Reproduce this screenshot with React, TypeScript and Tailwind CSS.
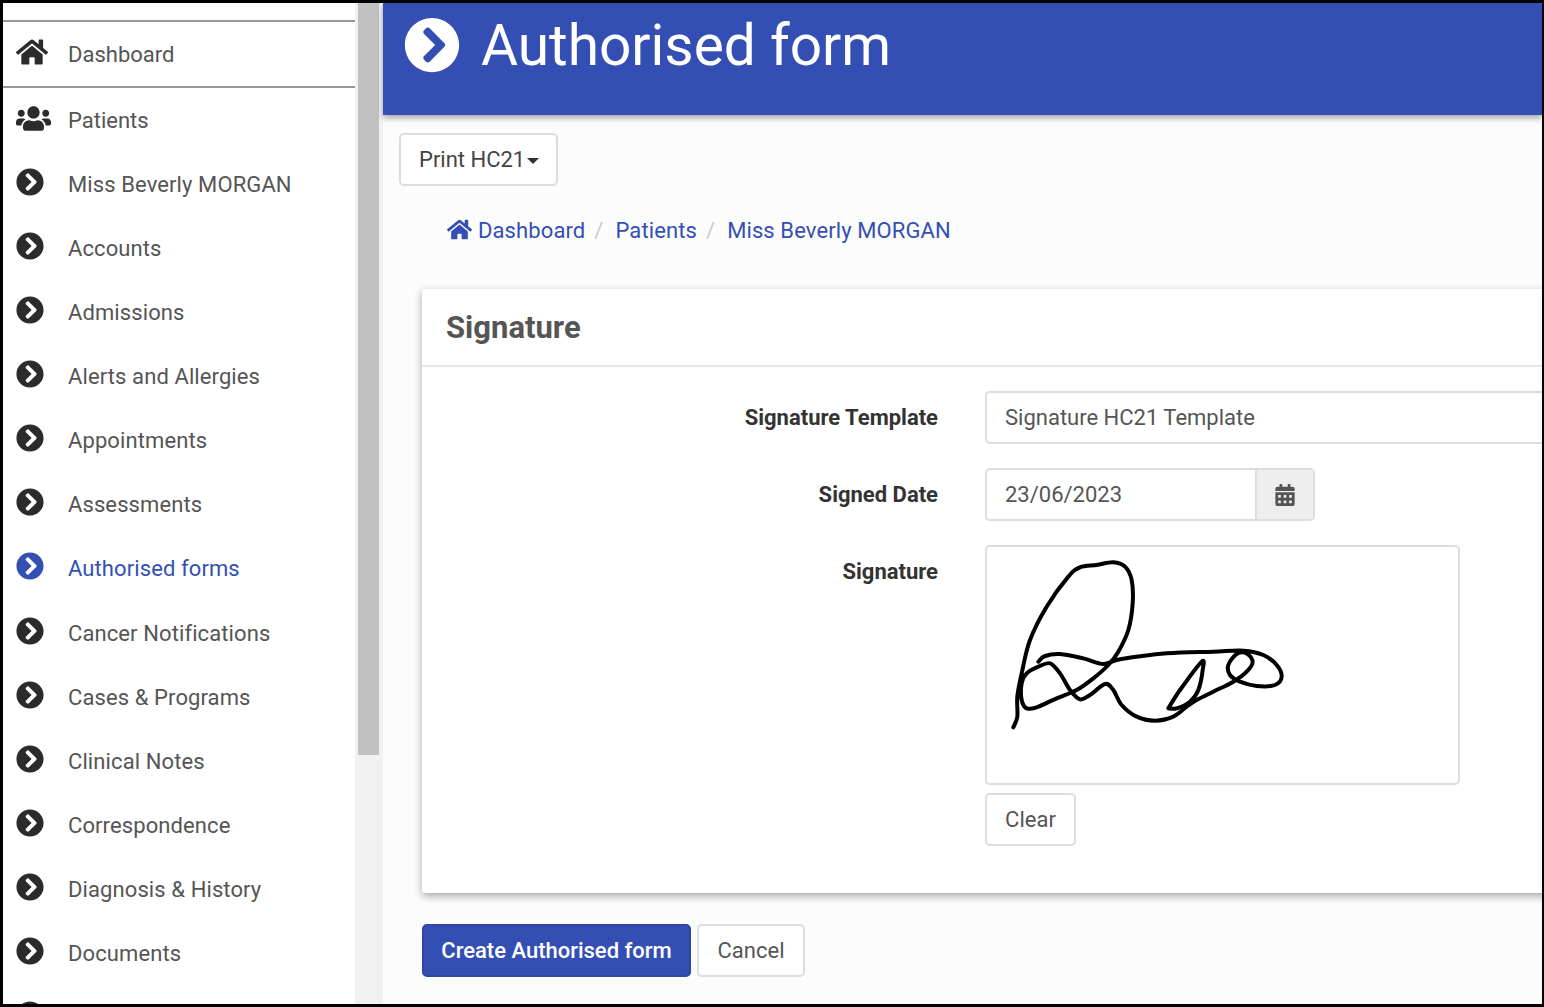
import { FaCalendarAlt, FaChevronCircleRight, FaHome, FaUsers } from 'react-icons/fa';

const navItems = [
  'Miss Beverly MORGAN',
  'Accounts',
  'Admissions',
  'Alerts and Allergies',
  'Appointments',
  'Assessments',
  'Authorised forms',
  'Cancer Notifications',
  'Cases & Programs',
  'Clinical Notes',
  'Correspondence',
  'Diagnosis & History',
  'Documents',
  '',
];

// signature traced from the reference, catmull-rom smoothed
const mainStroke: number[][] = [
  [100, 592], [112, 560], [112, 500], [125, 430], [150, 330], [200, 230], [265, 140], [300, 112], [350, 105], [400, 97],
  [435, 110], [455, 150], [458, 220], [445, 300], [415, 365], [385, 405], [340, 445], [290, 480], [230, 505], [170, 532],
  [140, 535], [125, 510], [125, 460], [140, 430], [175, 410], [210, 400], [240, 430], [270, 480], [300, 508], [330, 495],
  [375, 462], [400, 480], [425, 525], [470, 560], [525, 572], [580, 560], [620, 530], [650, 510], [700, 485], [760, 455],
  [800, 425], [818, 395], [800, 370], [770, 372], [745, 405], [750, 435], [780, 455], [830, 468], [885, 465], [905, 440],
  [890, 405], [850, 375], [790, 362], [700, 365], [560, 370], [420, 388], [370, 402], [310, 385], [240, 372], [195, 378],
  [175, 395],
];
const leafStroke: number[][] = [
  [565, 535], [600, 480], [665, 395], [668, 420], [655, 480], [630, 515], [590, 535], [565, 535],
];

function smoothPath(pts: number[][]) {
  let d = `M${pts[0][0]} ${pts[0][1]}`;
  for (let i = 0; i < pts.length - 1; i++) {
    const p0 = pts[Math.max(i - 1, 0)];
    const p1 = pts[i];
    const p2 = pts[i + 1];
    const p3 = pts[Math.min(i + 2, pts.length - 1)];
    const c1x = p1[0] + (p2[0] - p0[0]) / 6;
    const c1y = p1[1] + (p2[1] - p0[1]) / 6;
    const c2x = p2[0] - (p3[0] - p1[0]) / 6;
    const c2y = p2[1] - (p3[1] - p1[1]) / 6;
    d += ` C${c1x} ${c1y} ${c2x} ${c2y} ${p2[0]} ${p2[1]}`;
  }
  return d;
}

function Sidebar() {
  return (
    <div className="w-[352px] shrink-0 bg-white text-[22px] text-[#555]">
      <div className="mt-[17px] h-[68px] flex items-center border-y-2 border-[#999] pl-[13px]">
        <FaHome className="w-[32px] h-[32px] text-[#2b2b2b] -mt-[4px]" />
        <span className="ml-[20px]">Dashboard</span>
      </div>
      <div className="h-[64px] flex items-center pl-[13px]">
        <FaUsers className="w-[35px] h-[35px] text-[#2b2b2b] -mt-[4px]" />
        <span className="ml-[17px]">Patients</span>
      </div>
      {navItems.map((item, i) => {
        const active = item === 'Authorised forms';
        return (
          <div key={i} className="h-[64.15px] flex items-center pl-[13px]">
            <FaChevronCircleRight className={`w-[28px] h-[28px] -mt-[5px] ${active ? 'text-[#344fb3]' : 'text-[#2b2b2b]'}`} />
            <span className={`ml-[24px] tracking-[0.1px] ${active ? 'text-[#344fb3]' : ''}`}>{item}</span>
          </div>
        );
      })}
    </div>
  );
}

function FormRow({ label, children }: { label: string; children: React.ReactNode }) {
  return (
    <div className="flex">
      <label className="w-[563px] shrink-0 pr-[47px] text-right font-bold text-[#333] leading-[53px]">{label}</label>
      {children}
    </div>
  );
}

export default function App() {
  return (
    <div className="w-[1544px] h-[1007px] border-[3px] border-r-2 border-black overflow-hidden flex bg-white font-['Roboto',sans-serif]">
      <Sidebar />
      <div className="w-[28px] shrink-0 bg-[#f1f1f1]">
        <div className="ml-[3px] w-[21px] h-[752px] bg-[#c1c1c1]" />
      </div>
      <div className="flex-1 min-w-0 bg-[#fcfcfc] text-[22px] text-[#555]">
        <div className="h-[112px] bg-[#344fb3] shadow-[0_3px_6px_rgba(0,0,0,0.35)] flex items-start pl-[21px] pt-[14px] text-white">
          <FaChevronCircleRight className="w-[56px] h-[56px]" />
          <h1 className="ml-[21px] mt-[1px] text-[56.8px] leading-[56px]">Authorised form</h1>
        </div>
        <div className="pl-[16px] pt-[18px]">
          <button className="h-[53px] w-[159px] border-2 border-[#ddd] rounded-[5px] bg-white text-[#444] flex items-center pl-[18px]">
            Print HC21
            <span className="ml-[2px] mt-[3px] border-x-[6px] border-x-transparent border-t-[6px] border-t-[#333]" />
          </button>
        </div>
        <div className="flex items-center pl-[64px] mt-[26px] h-[36px] tracking-[0.1px] text-[#344fb3]">
          <FaHome className="w-[25px] h-[25px] -mt-[2px]" />
          <span className="ml-[6px]">Dashboard</span>
          <span className="mx-[9px] text-[#ccc]">/</span>
          <span className="ml-[3px]">Patients</span>
          <span className="mx-[9px] text-[#ccc]">/</span>
          <span className="ml-[3px]">Miss Beverly MORGAN</span>
        </div>
        <div className="ml-[39px] mt-[41px] w-[1200px] h-[604px] bg-white shadow-[0_3px_8px_rgba(0,0,0,0.35)] rounded-[2px]">
          <div className="h-[78px] border-b-2 border-[#e6e6e6] pl-[24px] pt-[2px] flex items-center text-[31px] font-bold text-[#555]">
            Signature
          </div>
          <div className="pt-[24px] flex flex-col gap-[24px]">
            <FormRow label="Signature Template">
              <div className="h-[53px] w-[640px] border-2 border-[#ddd] rounded-[5px] pl-[18px] flex items-center">
                Signature HC21 Template
              </div>
            </FormRow>
            <FormRow label="Signed Date">
              <div className="h-[53px] w-[330px] flex border-2 border-[#ddd] rounded-[5px] overflow-hidden">
                <div className="flex-1 pl-[18px] flex items-center">23/06/2023</div>
                <div className="w-[58px] border-l-2 border-[#ddd] bg-[#eee] flex items-center justify-center">
                  <FaCalendarAlt className="w-[20px] h-[22px] text-[#555]" />
                </div>
              </div>
            </FormRow>
            <FormRow label="Signature">
              <div>
                <div className="h-[240px] w-[475px] border-2 border-[#ddd] rounded-[5px] overflow-hidden bg-white">
                  <svg className="block w-full h-full" viewBox="21 51 1413 708" fill="none" stroke="#000" strokeWidth="12" strokeLinecap="round" strokeLinejoin="round">
                    <path d={smoothPath(mainStroke)} />
                    <path d={smoothPath(leafStroke)} />
                  </svg>
                </div>
                <button className="mt-[8px] h-[53px] w-[91px] border-2 border-[#ddd] rounded-[5px] bg-white text-[#555]">Clear</button>
              </div>
            </FormRow>
          </div>
        </div>
        <div className="ml-[39px] mt-[31px] flex gap-[6px]">
          <button className="h-[53px] w-[269px] rounded-[5px] bg-[#344fb3] text-white font-medium border-2 border-[#2f47a3]">Create Authorised form</button>
          <button className="h-[53px] w-[108px] rounded-[5px] border-2 border-[#ddd] bg-white text-[#555]">Cancel</button>
        </div>
      </div>
    </div>
  );
}
